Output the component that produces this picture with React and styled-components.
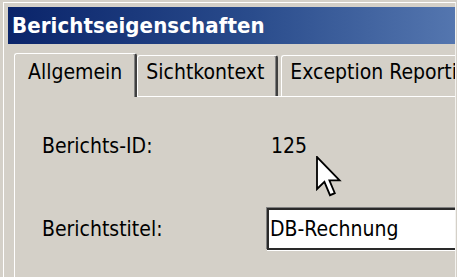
import React from "react";
import styled, { createGlobalStyle } from "styled-components";

const GlobalStyle = createGlobalStyle`
  html, body {
    margin: 0;
    padding: 0;
    background: #d4d0c8;
    overflow: hidden;
  }
`;

const App = () => {
  return (
    <>
      <GlobalStyle />
      <Screen>
        <Frame>
          <TitleBar>Berichtseigenschaften</TitleBar>
          <TabStrip>
            <Tab $active>Allgemein</Tab>
            <Tab>Sichtkontext</Tab>
            <Tab>Exception Reporting</Tab>
          </TabStrip>
          <Panel>
            <FieldRow>
              <Label>Berichts-ID:</Label>
              <Value>125</Value>
            </FieldRow>
            <FieldRow $input>
              <Label>Berichtstitel:</Label>
              <TextInput defaultValue="DB-Rechnung" />
            </FieldRow>
          </Panel>
        </Frame>
        <Cursor width="26" height="42" viewBox="0 0 13 21">
          <path
            d="M0.5 0.5 L0.5 16.5 L4.2 12.9 L7 19.6 L9.4 18.6 L6.7 12.2 L11.8 12.2 Z"
            fill="#fff"
            stroke="#000"
            strokeWidth="0.9"
            strokeLinejoin="miter"
          />
        </Cursor>
      </Screen>
    </>
  );
};

export default App;

// 스타일
const Screen = styled.div`
  position: relative;
  width: 457px;
  height: 277px;
  padding: 2px 0 0 3px;
  box-sizing: border-box;
  background: #d4d0c8;
  font-family: "DejaVu Sans Condensed", "DejaVu Sans", sans-serif;
  font-stretch: condensed;
  color: #000;
`;

const Frame = styled.div`
  width: 453px;
  height: 275px;
  box-sizing: border-box;
  padding: 4px 0 0 4px;
  border-top: 1px solid #ffffff;
  border-left: 1px solid #ffffff;
  border-right: 1px solid #f4f3f0;
  overflow: hidden;
  display: flex;
  flex-direction: column;
`;

const TitleBar = styled.div`
  height: 37px;
  flex-shrink: 0;
  display: flex;
  align-items: center;
  padding-left: 4px;
  background: linear-gradient(to right, #0a246a 0%, #2a4c8c 55%, #5476af 100%);
  color: #fff;
  font-weight: bold;
  font-size: 22px;
  letter-spacing: 0.1px;
  white-space: nowrap;
`;

const TabStrip = styled.div`
  display: flex;
  align-items: flex-end;
  height: 43px;
  margin-top: 9px;
  padding-left: 6px;
  flex-shrink: 0;
`;

const Tab = styled.div`
  position: relative;
  z-index: ${(p) => (p.$active ? 1 : 0)};
  box-sizing: border-box;
  height: ${(p) => (p.$active ? "44px" : "41px")};
  margin-bottom: ${(p) => (p.$active ? "-1px" : "0")};
  margin-right: ${(p) => (p.$active ? "0" : "3px")};
  padding: ${(p) => (p.$active ? "6px 13px 0 13px" : "4px 12px 0 8px")};
  background: #d4d0c8;
  border-top: 1px solid #ffffff;
  border-left: 1px solid #ffffff;
  border-right: 2px solid #404040;
  box-shadow: inset -1px 0 0 #808080;
  border-radius: 3px 3px 0 0;
  font-size: 21px;
  line-height: 24px;
  white-space: nowrap;
`;

const Panel = styled.div`
  flex: 1;
  margin-left: 6px;
  width: 600px;
  box-sizing: border-box;
  border-top: 1px solid #ffffff;
  border-left: 1px solid #ffffff;
  padding: 37px 0 0 27px;
  display: flex;
  flex-direction: column;
  gap: 50px;
`;

const FieldRow = styled.div`
  display: grid;
  grid-template-columns: 225px auto;
  align-items: center;
  height: ${(p) => (p.$input ? "42px" : "24px")};
`;

const Label = styled.div`
  font-size: 21px;
  line-height: 24px;
  white-space: nowrap;
`;

const Value = styled.div`
  font-size: 21px;
  line-height: 24px;
  padding-left: 4px;
`;

const TextInput = styled.input`
  box-sizing: border-box;
  width: 230px;
  height: 42px;
  margin: 0;
  padding: 0 0 0 1px;
  background: #fff;
  border: 2px solid #2a2a2a;
  border-right: none;
  box-shadow: -1px -1px 0 #808080, 0 1px 0 #ffffff;
  outline: none;
  font-family: "DejaVu Sans Condensed", "DejaVu Sans", sans-serif;
  font-stretch: condensed;
  font-size: 21px;
  color: #000;
`;

const Cursor = styled.svg`
  position: absolute;
  left: 316px;
  top: 156px;
  pointer-events: none;
`;
